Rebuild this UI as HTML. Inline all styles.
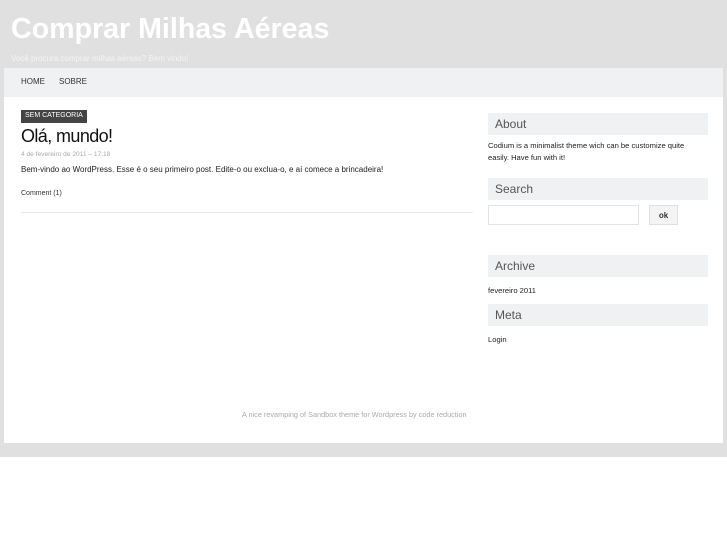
<!DOCTYPE html>
<html><head><meta charset="utf-8"><style>
*{margin:0;padding:0;box-sizing:border-box}
body{width:727px;height:545px;background:#fff;font-family:"Liberation Sans",Arial,sans-serif;position:relative;overflow:hidden}
.bg{position:absolute;left:0;top:0;width:727px;height:457px;background:#e0e0e0}
.abs{position:absolute;white-space:nowrap}
.wrap{position:absolute;left:4px;top:68px;width:719px;height:375px;background:#fff}
.nav{position:absolute;left:4px;top:68px;width:719px;height:29px;background:#f0f1f2}
.wh{position:absolute;left:488px;width:220px;background:#f0f1f2;height:22px;font-size:12px;color:#555;padding:4px 0 0 7px}
</style></head><body>
<div class="bg"></div>
<div class="abs" style="left:11px;top:13px;font-size:28.6px;font-weight:bold;color:#fff">Comprar Milhas Aéreas</div>
<div class="abs" style="left:11px;top:54px;font-size:8px;color:#f4f4f4">Você procura comprar milhas aéreas? Bem vindo!</div>
<div class="wrap"></div>
<div class="nav"></div>
<div class="abs" style="left:21px;top:77px;font-size:8px;color:#333">HOME</div>
<div class="abs" style="left:59px;top:77px;font-size:8px;color:#333">SOBRE</div>
<div class="abs" style="left:21px;top:110px;width:66px;height:13px;background:#444;color:#fff;font-size:7px;padding:2px 0 0 4px">SEM CATEGORIA</div>
<div class="abs" style="left:21px;top:126px;font-size:18px;color:#111;letter-spacing:-0.6px">Olá, mundo!</div>
<div class="abs" style="left:21px;top:151px;font-size:6.6px;color:#aaa">4 de fevereiro de 2011 – 17:18</div>
<div class="abs" style="left:21px;top:165px;font-size:8px;color:#222">Bem-vindo ao WordPress. Esse é o seu primeiro post. Edite-o ou exclua-o, e aí comece a brincadeira!</div>
<div class="abs" style="left:21px;top:190px;font-size:7px;color:#333">Comment (1)</div>
<div class="abs" style="left:21px;top:212px;width:452px;height:1px;background:#e8e8e8"></div>
<div class="wh" style="top:113px">About</div>
<div class="abs" style="left:488px;top:140px;font-size:7.6px;color:#222;line-height:12px">Codium is a minimalist theme wich can be customize quite<br>easily. Have fun with it!</div>
<div class="wh" style="top:178px">Search</div>
<div class="abs" style="left:488px;top:205px;width:151px;height:20px;border:1px solid #e4e4e4;background:#fff"></div>
<div class="abs" style="left:649px;top:205px;width:29px;height:20px;border:1px solid #e0e0e0;background:#f4f4f4;font-size:8px;font-weight:bold;color:#333;text-align:center;padding-top:5px">ok</div>
<div class="wh" style="top:255px">Archive</div>
<div class="abs" style="left:488px;top:286px;font-size:7.6px;color:#222">fevereiro 2011</div>
<div class="wh" style="top:304px">Meta</div>
<div class="abs" style="left:488px;top:335px;font-size:7.6px;color:#222">Login</div>
<div class="abs" style="left:242px;top:410px;font-size:7.3px;color:#aaa">A nice revamping of Sandbox theme for Wordpress by code reduction</div>
</body></html>
